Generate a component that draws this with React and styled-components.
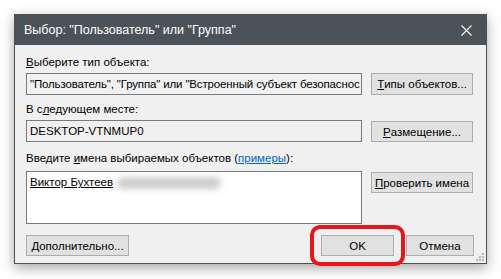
import React from 'react';
import styled, { createGlobalStyle } from 'styled-components';

const GlobalStyle = createGlobalStyle`
  html, body {
    margin: 0;
    padding: 0;
    background: #ffffff;
  }
  body {
    font-family: "Liberation Sans", Arial, sans-serif;
    font-size: 11.5px;
    color: #000;
  }
`;

const Page = styled.div`
  width: 501px;
  height: 279px;
  padding: 14px 0 0 14px;
  box-sizing: border-box;
`;

const Window = styled.div`
  position: relative;
  width: 473px;
  height: 250px;
  box-sizing: border-box;
  border: 1px solid #4c5358;
  background: #f0f0f0;
  box-shadow: 0 4px 12px rgba(0, 0, 0, 0.35);
  display: flex;
  flex-direction: column;
`;

const TitleBar = styled.div`
  height: 30px;
  background: #4c5358;
  color: #ffffff;
  display: flex;
  align-items: center;
  justify-content: space-between;
  padding: 0 0 0 9px;
  font-size: 12.5px;
`;

const CloseBtn = styled.div`
  width: 40px;
  height: 30px;
  display: flex;
  align-items: center;
  justify-content: center;
`;

const Body = styled.div`
  flex: 1;
  padding: 10px 12px 0 11px;
  display: flex;
  flex-direction: column;
`;

const Label = styled.div`
  height: 15px;
  line-height: 15px;
  margin-top: ${p => p.$top || 0}px;
  margin-bottom: ${p => p.$bottom || 3}px;
  white-space: nowrap;
`;

const Row = styled.div`
  display: grid;
  grid-template-columns: 336px 102px;
  column-gap: 9px;
  align-items: start;
`;

const Field = styled.div`
  height: ${p => p.$h || 22}px;
  box-sizing: border-box;
  border: 1px solid #7a7a7a;
  background: ${p => (p.$white ? '#ffffff' : '#f0f0f0')};
  padding: 2px 3px;
  line-height: 16px;
  letter-spacing: ${p => (p.$tight ? '-0.15px' : 'normal')};
  white-space: nowrap;
  overflow: hidden;
  text-overflow: clip;
`;

const Button = styled.div`
  height: ${p => p.$h || 22}px;
  width: ${p => (p.$w ? `${p.$w}px` : 'auto')};
  box-sizing: border-box;
  border: 1px solid #adadad;
  background: #e1e1e1;
  display: flex;
  align-items: center;
  justify-content: center;
  white-space: nowrap;
  margin-top: ${p => p.$top || 0}px;
  margin-left: ${p => p.$left || 0}px;
`;

const U = styled.span`
  text-decoration: underline;
`;

const Link = styled.span`
  color: #0066cc;
  text-decoration: underline;
`;

const Blur = styled.span`
  display: inline-block;
  width: 104px;
  height: 12px;
  margin-left: 4px;
  vertical-align: middle;
  border-radius: 6px;
  background: #cdcdcd;
  filter: blur(3px);
`;

const Footer = styled.div`
  margin-top: 11px;
  display: flex;
  align-items: center;
`;

const Spacer = styled.div`
  flex: 1;
`;

const Highlight = styled.div`
  padding: 6px 7px;
  margin: -11px 0 -11px 0;
  border: 4px solid #e8151b;
  border-radius: 10px;
  display: flex;
`;

const Grip = styled.svg`
  position: absolute;
  right: 2px;
  bottom: 2px;
`;

export default function App() {
  return (
    <>
      <GlobalStyle />
      <Page>
        <Window>
          <TitleBar>
            <span>Выбор: "Пользователь" или "Группа"</span>
            <CloseBtn>
              <svg width="11" height="11" viewBox="0 0 11 11">
                <path d="M0.5 0.5 L10.5 10.5 M10.5 0.5 L0.5 10.5" stroke="#fff" strokeWidth="1.1" />
              </svg>
            </CloseBtn>
          </TitleBar>
          <Body>
            <Label><U>В</U>ыберите тип объекта:</Label>
            <Row>
              <Field $tight>"Пользователь", "Группа" или "Встроенный субъект безопаснос</Field>
              <Button><U>Т</U>ипы объектов...</Button>
            </Row>

            <Label $top={7}>В с<U>л</U>едующем месте:</Label>
            <Row>
              <Field>DESKTOP-VTNMUP0</Field>
              <Button $top={1} $h={21}><U>Р</U>азмещение...</Button>
            </Row>

            <Label $top={9} $bottom={5}>Введите <U>и</U>мена выбираемых объектов (<Link>примеры</Link>):</Label>
            <Row>
              <Field $white $h={53}><U>Виктор Бухтеев</U><Blur /></Field>
              <Button $top={1} $h={21}><U>П</U>роверить имена</Button>
            </Row>

            <Footer>
              <Button $w={103} $h={21}><U>Д</U>ополнительно...</Button>
              <Spacer />
              <Highlight>
                <Button $w={73} $h={21}>OK</Button>
              </Highlight>
              <Button $w={68} $h={21} $left={1}>Отмена</Button>
            </Footer>
          </Body>
          <Grip width="8" height="8" viewBox="0 0 8 8">
            <rect x="6" y="0" width="2" height="2" fill="#b8b8b8" />
            <rect x="3" y="3" width="2" height="2" fill="#b8b8b8" />
            <rect x="6" y="3" width="2" height="2" fill="#b8b8b8" />
            <rect x="0" y="6" width="2" height="2" fill="#b8b8b8" />
            <rect x="3" y="6" width="2" height="2" fill="#b8b8b8" />
            <rect x="6" y="6" width="2" height="2" fill="#b8b8b8" />
          </Grip>
        </Window>
      </Page>
    </>
  );
}
